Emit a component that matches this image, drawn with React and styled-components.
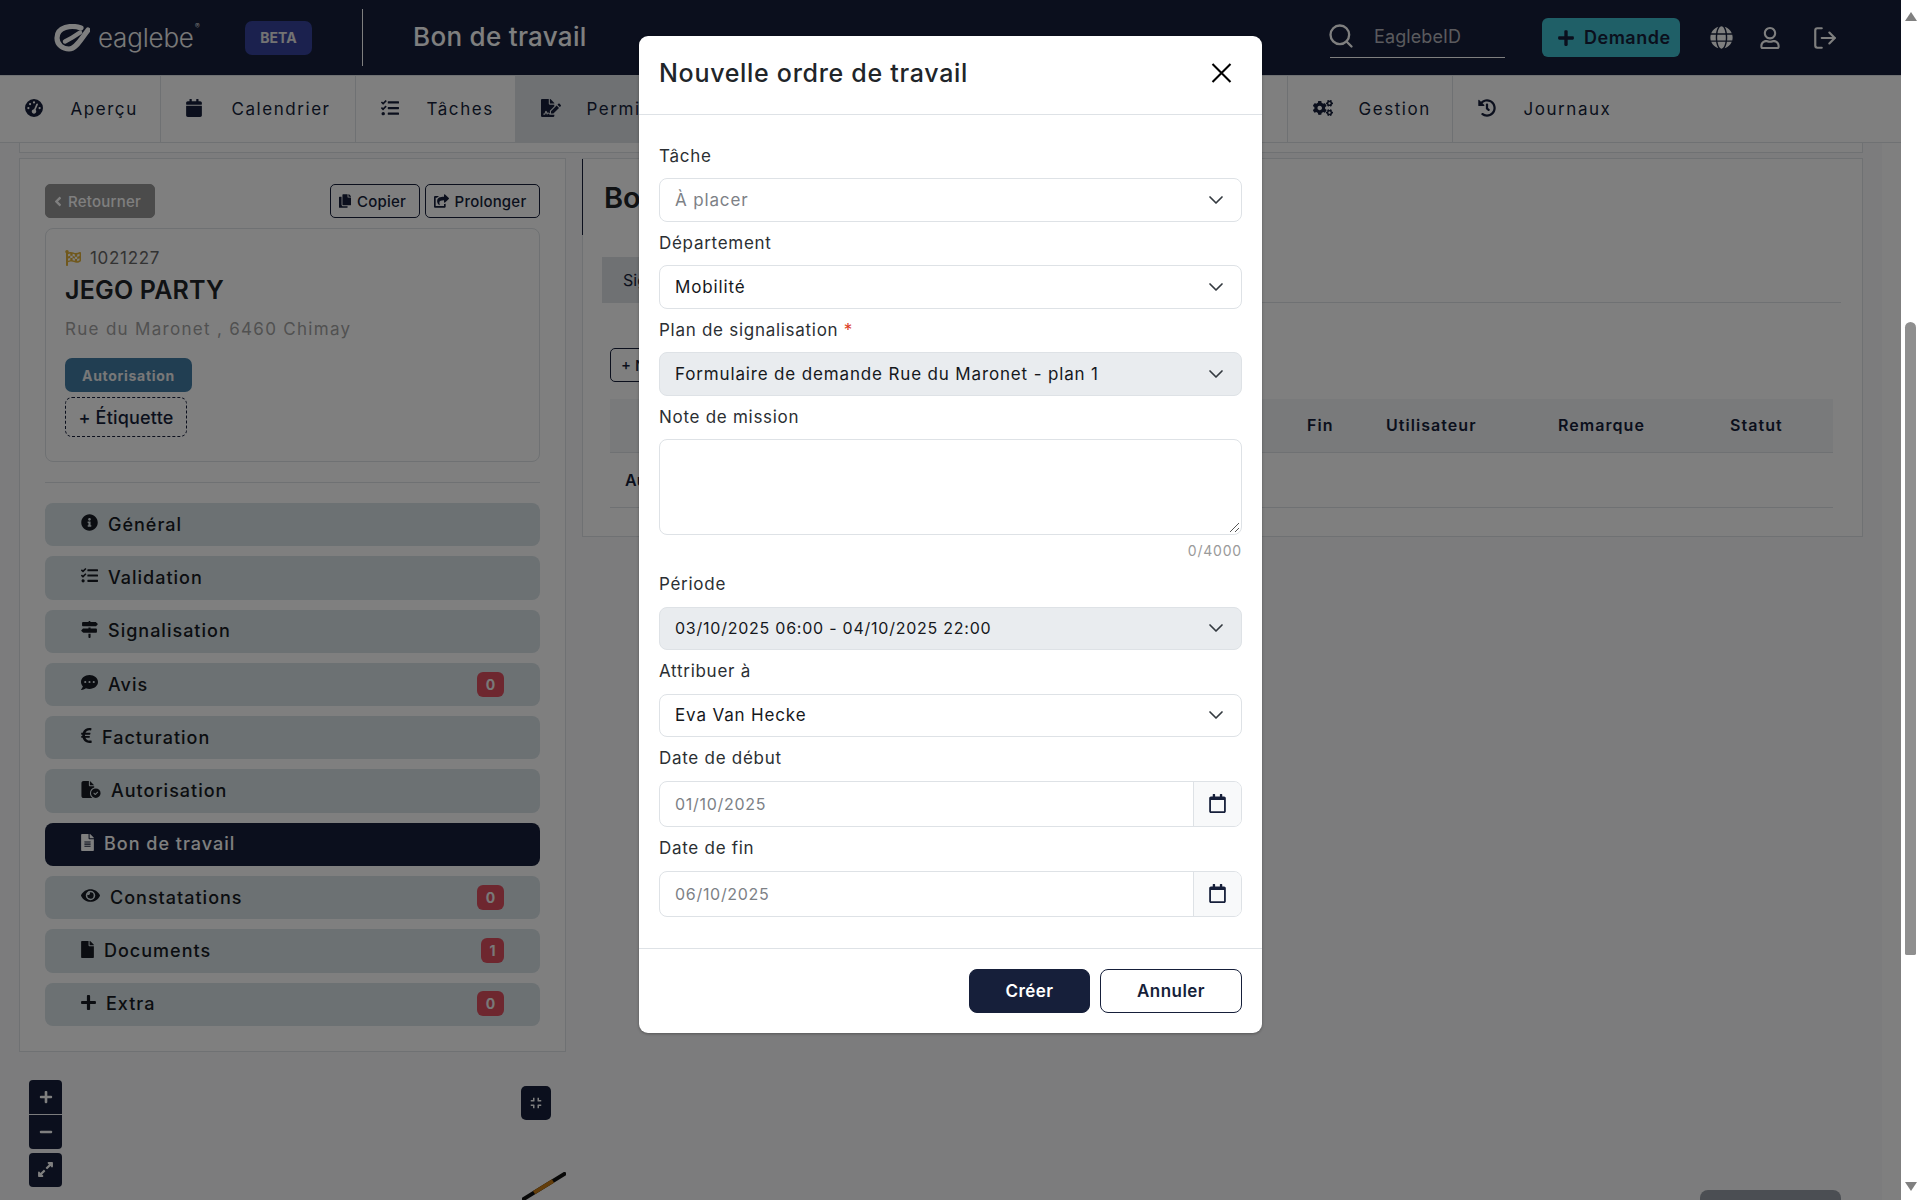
import React from "react";
import styled, { createGlobalStyle } from "styled-components";
import {
  FaCalendar,
  FaTasks,
  FaFileSignature,
  FaCogs,
  FaHistory,
  FaInfoCircle,
  FaCommentDots,
  FaEuroSign,
  FaEye,
  FaFile,
  FaFileAlt,
  FaPlus,
  FaMinus,
  FaCopy,
  FaShareSquare,
  FaFlagCheckered,
  FaGlobe,
  FaExpandAlt,
  FaCompress,
  FaRegCalendar,
  FaRegUser,
  FaAngleLeft,
} from "react-icons/fa";
import { FaGaugeHigh, FaSignsPost, FaFileCircleCheck } from "react-icons/fa6";
import { LuLogOut, LuSearch } from "react-icons/lu";

const navy = "#161f3a";
const line = "#dee2e6";

const GlobalStyle = createGlobalStyle`
  html, body {
    margin: 0;
    padding: 0;
    overflow: hidden;
  }
  * {
    box-sizing: border-box;
  }
  body {
    font-family: Inter, "Liberation Sans", sans-serif;
    color: #212529;
  }
`;

const Shell = styled.div`
  display: flex;
  width: 1920px;
  height: 1200px;
  overflow: hidden;
  background: #fff;
`;

const PageArea = styled.div`
  position: relative;
  width: 1901px;
  height: 1200px;
  overflow: hidden;
  background: #fff;
`;

const Backdrop = styled.div`
  position: absolute;
  inset: 0;
  background: rgba(0, 0, 0, 0.5);
`;

const ScrollTrack = styled.div`
  width: 19px;
  display: flex;
  flex-direction: column;
  align-items: center;
  background: #fff;
`;

const ScrollThumb = styled.div`
  width: 11px;
  height: 633px;
  margin-top: 301px;
  border-radius: 6px 6px 2px 2px;
  background: #8f8f8f;
`;

const ArrowUp = styled.div`
  margin-top: 12px;
  width: 0;
  height: 0;
  border-left: 6px solid transparent;
  border-right: 6px solid transparent;
  border-bottom: 9px solid #808080;
`;

const ArrowDown = styled.div`
  margin-top: 227px;
  width: 0;
  height: 0;
  border-left: 6px solid transparent;
  border-right: 6px solid transparent;
  border-top: 9px solid #808080;
`;

const TopBar = styled.header`
  height: 75px;
  display: flex;
  align-items: center;
  background: ${navy};
  color: #fff;
`;

const Logo = styled.div`
  display: flex;
  align-items: center;
  margin-left: 54px;
  width: 191px;
  gap: 8px;
`;

const LogoText = styled.span`
  position: relative;
  font-size: 26px;
  font-weight: 300;
  letter-spacing: -0.2px;
  color: #f2f2f2;
  line-height: 1;
  sup {
    position: absolute;
    top: -2px;
    right: -6px;
    font-size: 7px;
    letter-spacing: 0;
  }
`;

const BetaBadge = styled.span`
  width: 67px;
  height: 34px;
  display: flex;
  align-items: center;
  justify-content: center;
  border-radius: 7px;
  background: #36429c;
  font-size: 14px;
  font-weight: 700;
  color: #e6e6e6;
`;

const BarDivider = styled.div`
  width: 1px;
  height: 57px;
  margin: 0 50px;
  background: #fff;
`;

const BarTitle = styled.h1`
  margin: 0 0 2px;
  flex: 1;
  font-size: 26px;
  font-weight: 500;
  letter-spacing: 0.3px;
  color: #fff;
`;

const SearchField = styled.div`
  width: 175px;
  height: 43px;
  margin: 0 -1px 2px 1px;
  display: flex;
  align-items: center;
  gap: 19px;
  border-bottom: 1px solid #fff;
  color: #fff;
  svg {
    margin-left: -3px;
  }
  span {
    font-size: 18px;
    color: #b5b5bc;
    letter-spacing: 0.1px;
  }
`;

const DemandButton = styled.button`
  width: 138px;
  height: 39px;
  margin: 0 30px 0 38px;
  display: flex;
  align-items: center;
  gap: 9px;
  padding: 0 0 0 15px;
  border: 0;
  border-radius: 6px;
  background: #3ebece;
  color: ${navy};
  font: 600 18px Inter, sans-serif;
  letter-spacing: 0.5px;
`;

const BarIcons = styled.div`
  margin-right: 63px;
  display: flex;
  align-items: center;
  gap: 26px;
  color: #fff;
  svg:last-child {
    margin-left: 5px;
  }
`;

const NavBar = styled.nav`
  height: 68px;
  display: flex;
  background: #fff;
  border-top: 1px solid ${line};
  border-bottom: 1px solid ${line};
`;

const NavItem = styled.a`
  width: ${(p) => p.$width}px;
  display: flex;
  align-items: center;
  padding-left: 25px;
  border-right: 1px solid ${line};
  background: ${(p) => (p.$active ? line : "transparent")};
  color: ${navy};
  font-size: 17px;
  letter-spacing: 1.55px;
  white-space: nowrap;
  &:last-child {
    border-right: 0;
  }
`;

const NavIcon = styled.span`
  width: 45.5px;
  flex: none;
  display: flex;
  margin-top: -3px;
  svg {
    width: ${(p) => p.$iconWidth}px;
  }
`;

const Content = styled.div`
  width: 1882px;
  height: 1057px;
  padding: 0 19px;
  background: #f8f9fa;
`;

const TopStrip = styled.div`
  height: 10px;
  margin-bottom: 5px;
  background: #fff;
  border: 1px solid ${line};
  border-top: 0;
`;

const Columns = styled.div`
  display: flex;
  align-items: flex-start;
  gap: 16px;
`;

const LeftColumn = styled.div`
  width: 547px;
  flex: none;
`;

const Panel = styled.section`
  padding: 25px 25px 25px;
  background: #fff;
  border: 1px solid ${line};
`;

const ActionRow = styled.div`
  display: flex;
  gap: 5px;
  justify-content: flex-end;
  margin-bottom: 10px;
`;

const SmallButton = styled.button`
  height: 34px;
  width: ${(p) => p.$width}px;
  margin-right: ${(p) => (p.$back ? "auto" : "0")};
  display: flex;
  align-items: center;
  justify-content: center;
  gap: 6px;
  padding: 0 5px 0 0;
  border-radius: 5px;
  border: 1px solid ${(p) => (p.$back ? "#969696" : navy)};
  background: ${(p) => (p.$back ? "#969696" : "#fff")};
  color: ${(p) => (p.$back ? "#fff" : navy)};
  font: 500 15px Inter, sans-serif;
  letter-spacing: 0.2px;
  svg {
    width: ${(p) => p.$iconWidth}px;
  }
`;

const InfoCard = styled.div`
  height: 234px;
  padding: 19px 19px 0;
  border: 1px solid ${line};
  border-radius: 8px;
`;

const RefRow = styled.div`
  display: flex;
  align-items: center;
  gap: 9px;
  height: 20px;
  font-size: 17px;
  letter-spacing: 0.7px;
  color: #666;
`;

const SiteName = styled.h2`
  margin: 6px 0 0;
  font-size: 25px;
  line-height: 32px;
  font-weight: 600;
  letter-spacing: 0.2px;
  color: #212529;
`;

const Address = styled.div`
  margin-top: 11px;
  height: 24px;
  font-size: 17px;
  line-height: 24px;
  letter-spacing: 1.3px;
  color: #a3a3a3;
`;

const StatusPill = styled.div`
  margin-top: 17px;
  width: 127px;
  height: 34px;
  display: flex;
  align-items: center;
  justify-content: center;
  border-radius: 7px;
  background: #427ca4;
  color: #f0f0f0;
  font-size: 14px;
  font-weight: 700;
  letter-spacing: 0.7px;
`;

const TagButton = styled.div`
  margin-top: 5px;
  width: 122px;
  height: 40px;
  display: flex;
  align-items: center;
  justify-content: center;
  border: 1px dashed ${navy};
  border-radius: 7px;
  color: ${navy};
  font-size: 18px;
  font-weight: 500;
  letter-spacing: 0.2px;
`;

const PanelRule = styled.hr`
  margin: 20px 0 20px;
  border: 0;
  border-top: 1px solid ${line};
`;

const SectionList = styled.div`
  display: flex;
  flex-direction: column;
  gap: 10px;
`;

const SectionButton = styled.div`
  height: 43.3px;
  display: flex;
  align-items: center;
  padding: 0 36px 1px 36px;
  border-radius: 8px;
  background: ${(p) => (p.$active ? navy : "#d8e2e6")};
  color: ${(p) => (p.$active ? "#fff" : "#161a22")};
  font-size: 18px;
  font-weight: 500;
  letter-spacing: 1px;
`;

const SectionIcon = styled.span`
  display: flex;
  margin: -3px 10px 0 0;
  svg {
    width: ${(p) => p.$iconWidth}px;
  }
`;

const CountBadge = styled.span`
  margin: 0 0 0 auto;
  min-width: ${(p) => (p.$narrow ? 23 : 27)}px;
  height: 25px;
  display: flex;
  align-items: center;
  justify-content: center;
  border-radius: 6px;
  background: #dc4f5f;
  color: #f2f2f2;
  font-size: 14px;
  font-weight: 700;
  letter-spacing: 0;
`;

const MapArea = styled.div`
  position: relative;
  height: 148px;
`;

const MapControl = styled.button`
  position: absolute;
  left: 10px;
  top: ${(p) => p.$top}px;
  width: 33px;
  height: ${(p) => p.$height}px;
  display: flex;
  align-items: center;
  justify-content: center;
  padding: 0;
  border: 0;
  border-radius: ${(p) => p.$radius};
  background: ${navy};
  color: #fff;
`;

const CompressButton = styled.button`
  position: absolute;
  right: 15px;
  top: 34px;
  width: 30px;
  height: 34px;
  display: flex;
  align-items: center;
  justify-content: center;
  padding: 0;
  border: 0;
  border-radius: 5px;
  background: ${navy};
  color: #fff;
`;

const RouteLine = styled.svg`
  position: absolute;
  right: 0;
  bottom: 0;
`;

const MainCard = styled.section`
  flex: 1;
  height: 379px;
  background: #fff;
  border: 1px solid ${line};
`;

const TitleBlock = styled.div`
  height: 76px;
  margin-left: -1px;
  display: flex;
  align-items: center;
  padding: 0 0 0 21px;
  border-left: 1px solid ${navy};
`;

const MainTitle = styled.h2`
  margin: 0;
  font-size: 29px;
  font-weight: 600;
  color: #212529;
`;

const TabRow = styled.div`
  height: 46px;
  margin: 22px 21px 0 19px;
  display: flex;
  border-bottom: 1px solid ${line};
`;

const Tab = styled.div`
  padding: 0 21px;
  display: flex;
  align-items: center;
  background: ${line};
  font-size: 16px;
  color: ${navy};
`;

const AddRow = styled.div`
  margin: 45px 0 17px 27px;
`;

const AddButton = styled.button`
  height: 34px;
  padding: 0 10px;
  border: 1px solid ${navy};
  border-radius: 5px;
  background: #fff;
  color: ${navy};
  font: 500 15px Inter, sans-serif;
`;

const TableHead = styled.div`
  height: 54px;
  padding-bottom: 2px;
  margin: 0 29px 0 27px;
  display: grid;
  grid-template-columns: 697px 79px 172px 172px 1fr;
  align-items: center;
  background: #f3f4f6;
  border-bottom: 1px solid ${line};
  color: ${navy};
  font-size: 16px;
  font-weight: 600;
  letter-spacing: 1.05px;
`;

const TableRow = styled.div`
  height: 55px;
  margin: 0 29px 0 27px;
  padding-left: 15px;
  display: flex;
  align-items: center;
  border-bottom: 1px solid ${line};
  color: ${navy};
  font-size: 16px;
  font-weight: 600;
`;

const FloatingTab = styled.div`
  position: absolute;
  left: 1700px;
  bottom: 0;
  width: 141px;
  height: 10px;
  border-radius: 8px 8px 0 0;
  background: #969ca6;
`;

const Modal = styled.div`
  position: absolute;
  left: 639px;
  top: 36px;
  width: 623px;
  height: 997px;
  display: flex;
  flex-direction: column;
  background: #fff;
  border-radius: 9px;
  box-shadow: 0 1px 3px rgba(0, 0, 0, 0.3);
  overflow: hidden;
`;

const ModalHeader = styled.div`
  height: 79px;
  flex: none;
  display: flex;
  align-items: center;
  justify-content: space-between;
  padding: 0 30px 4px 20px;
  border-bottom: 1px solid ${line};
`;

const ModalTitle = styled.h3`
  margin: 0;
  font-size: 25px;
  font-weight: 500;
  letter-spacing: 0.7px;
  color: #212529;
`;

const ModalBody = styled.div`
  flex: 1;
  padding: 29.5px 20px 0;
`;

const Field = styled.div`
  margin-bottom: 10px;
`;

const FieldLabel = styled.label`
  display: block;
  height: 22.5px;
  margin-bottom: 11px;
  font-size: 17px;
  line-height: 23px;
  letter-spacing: 0.72px;
  color: #2b2f33;
  em {
    font-style: normal;
    color: #dc3c1e;
  }
`;

const SelectBox = styled.div`
  height: 43.5px;
  display: flex;
  align-items: center;
  justify-content: space-between;
  padding: 0 17px 0 15px;
  border: 1px solid ${line};
  border-radius: 8px;
  background: ${(p) => (p.$filled ? "#e9ecef" : "#fff")};
  color: ${(p) => (p.$muted ? "#7d8186" : "#16181c")};
  font-size: ${(p) => (p.$numeric ? 16 : 17)}px;
  letter-spacing: ${(p) => (p.$numeric ? 0.76 : 0.85)}px;
`;

const NoteBox = styled.div`
  position: relative;
  height: 96px;
  border: 1px solid ${line};
  border-radius: 8px;
`;

const ResizeGrip = styled.svg`
  position: absolute;
  right: 1px;
  bottom: 1px;
`;

const NoteCount = styled.div`
  margin-top: 6px;
  margin-bottom: 12px;
  height: 20px;
  text-align: right;
  font-size: 14px;
  line-height: 20px;
  letter-spacing: 0.8px;
  color: #9a9a9a;
`;

const DateGroup = styled.div`
  height: 46.5px;
  display: flex;
  border: 1px solid ${line};
  border-radius: 8px;
  overflow: hidden;
`;

const DateValue = styled.div`
  flex: 1;
  display: flex;
  align-items: center;
  padding-left: 15px;
  color: #7d8186;
  font-size: 16px;
  letter-spacing: 0.7px;
`;

const DateAddon = styled.div`
  width: 48px;
  display: flex;
  align-items: center;
  justify-content: center;
  background: #f8f9fa;
  border-left: 1px solid ${line};
  color: ${navy};
`;

const ModalFooter = styled.div`
  height: 85px;
  flex: none;
  display: flex;
  align-items: center;
  justify-content: flex-end;
  gap: 10px;
  padding: 0 20px;
  border-top: 1px solid ${line};
`;

const FooterButton = styled.button`
  width: ${(p) => p.$width}px;
  height: 44px;
  border: 1px solid ${navy};
  border-radius: 8px;
  background: ${(p) => (p.$primary ? navy : "#fff")};
  color: ${(p) => (p.$primary ? "#fff" : navy)};
  font: 600 17px Inter, sans-serif;
  letter-spacing: 0.45px;
`;

const navItems = [
  { label: "Aperçu", width: 161, w: 18, icon: <FaGaugeHigh size={18} /> },
  { label: "Calendrier", width: 195, w: 16, icon: <FaCalendar size={18} /> },
  { label: "Tâches", width: 160, w: 18, icon: <FaTasks size={18} /> },
  { label: "Permis", width: 200, w: 20, active: true, icon: <FaFileSignature size={18} /> },
  { label: "Planning", width: 200, w: 16, icon: <FaCalendar size={18} /> },
  { label: "Facture", width: 372, w: 14, icon: <FaFile size={18} /> },
  { label: "Gestion", width: 165, w: 20, icon: <FaCogs size={16} /> },
  { label: "Journaux", width: 180, w: 18, icon: <FaHistory size={18} /> },
];

const sections = [
  { label: "Général", w: 17, icon: <FaInfoCircle size={17} /> },
  { label: "Validation", w: 17, icon: <FaTasks size={17} /> },
  { label: "Signalisation", w: 17, icon: <FaSignsPost size={17} /> },
  { label: "Avis", w: 17, count: 0, icon: <FaCommentDots size={17} /> },
  { label: "Facturation", w: 11, icon: <FaEuroSign size={17} /> },
  { label: "Autorisation", w: 20, icon: <FaFileCircleCheck size={17} /> },
  { label: "Bon de travail", w: 13, active: true, icon: <FaFileAlt size={17} /> },
  { label: "Constatations", w: 19, count: 0, icon: <FaEye size={17} /> },
  { label: "Documents", w: 13, count: 1, icon: <FaFile size={17} /> },
  { label: "Extra", w: 15, count: 0, icon: <FaPlus size={17} /> },
];

function Chevron() {
  return (
    <svg width="16" height="16" viewBox="0 0 16 16" fill="none">
      <path
        d="m2 5 6 6 6-6"
        stroke="#343a40"
        strokeWidth="1.7"
        strokeLinecap="round"
        strokeLinejoin="round"
      />
    </svg>
  );
}

function CloseIcon() {
  return (
    <svg width="21" height="20" viewBox="0 0 21 20" fill="none">
      <path d="M1.5 1 19.5 19M19.5 1 1.5 19" stroke="#000" strokeWidth="2.1" />
    </svg>
  );
}

function LogoMark() {
  return (
    <svg width="36" height="28" viewBox="0 0 36 28" fill="none">
      <path
        d="M27 4C17 0.5 3 3 3 14C3 21 9 25 15 25C22 25 27 15 34 6"
        stroke="#fff"
        strokeWidth="5.2"
        strokeLinecap="round"
      />
      <path d="M11 17.5C16 15 21 12 26 8.5" stroke="#fff" strokeWidth="4.5" strokeLinecap="round" />
    </svg>
  );
}

function SelectField({ label, required, value, muted, filled, numeric }) {
  return (
    <Field>
      <FieldLabel>
        {label}
        {required && <em> *</em>}
      </FieldLabel>
      <SelectBox $muted={muted} $filled={filled} $numeric={numeric}>
        {value}
        <Chevron />
      </SelectBox>
    </Field>
  );
}

function DateField({ label, value }) {
  return (
    <Field>
      <FieldLabel>{label}</FieldLabel>
      <DateGroup>
        <DateValue>{value}</DateValue>
        <DateAddon>
          <FaRegCalendar size={19} />
        </DateAddon>
      </DateGroup>
    </Field>
  );
}

function App() {
  return (
    <Shell>
      <GlobalStyle />
      <PageArea>
        <TopBar>
          <Logo>
            <LogoMark />
            <LogoText>
              eaglebe<sup>®</sup>
            </LogoText>
          </Logo>
          <BetaBadge>BETA</BetaBadge>
          <BarDivider />
          <BarTitle>Bon de travail</BarTitle>
          <SearchField>
            <LuSearch size={28} />
            <span>EaglebeID</span>
          </SearchField>
          <DemandButton>
            <FaPlus size={18} />
            Demande
          </DemandButton>
          <BarIcons>
            <FaGlobe size={23} />
            <FaRegUser size={22} />
            <LuLogOut size={26} />
          </BarIcons>
        </TopBar>
        <NavBar>
          {navItems.map((item) => (
            <NavItem key={item.label} $width={item.width} $active={item.active}>
              <NavIcon $iconWidth={item.w}>{item.icon}</NavIcon>
              {item.label}
            </NavItem>
          ))}
        </NavBar>
        <Content>
          <TopStrip />
          <Columns>
            <LeftColumn>
              <Panel>
                <ActionRow>
                  <SmallButton $back $width={110} $iconWidth={8}>
                    <FaAngleLeft size={15} />
                    Retourner
                  </SmallButton>
                  <SmallButton $width={90} $iconWidth={12}>
                    <FaCopy size={14} />
                    Copier
                  </SmallButton>
                  <SmallButton $width={115} $iconWidth={15}>
                    <FaShareSquare size={14} />
                    Prolonger
                  </SmallButton>
                </ActionRow>
                <InfoCard>
                  <RefRow>
                    <FaFlagCheckered size={16} color="#e0b13a" />
                    1021227
                  </RefRow>
                  <SiteName>JEGO PARTY</SiteName>
                  <Address>Rue du Maronet , 6460 Chimay</Address>
                  <StatusPill>Autorisation</StatusPill>
                  <TagButton>+ Étiquette</TagButton>
                </InfoCard>
                <PanelRule />
                <SectionList>
                  {sections.map((s) => (
                    <SectionButton key={s.label} $active={s.active}>
                      <SectionIcon $iconWidth={s.w}>{s.icon}</SectionIcon>
                      {s.label}
                      {s.count !== undefined && (
                        <CountBadge $narrow={s.count === 1}>{s.count}</CountBadge>
                      )}
                    </SectionButton>
                  ))}
                </SectionList>
              </Panel>
              <MapArea>
                <MapControl $top={28} $height={34} $radius="4px 4px 0 0">
                  <FaPlus size={14} />
                </MapControl>
                <MapControl $top={63} $height={34} $radius="0 0 4px 4px">
                  <FaMinus size={14} />
                </MapControl>
                <MapControl $top={101} $height={34} $radius="4px">
                  <FaExpandAlt size={17} />
                </MapControl>
                <CompressButton>
                  <FaCompress size={12} />
                </CompressButton>
                <RouteLine width="44" height="28" viewBox="0 0 44 28">
                  <path d="M0 28 44 1" stroke="#111" strokeWidth="4" />
                  <path d="M12 20.6 31 9" stroke="#c67a14" strokeWidth="4" />
                </RouteLine>
              </MapArea>
            </LeftColumn>
            <MainCard>
              <TitleBlock>
                <MainTitle>Bon de travail</MainTitle>
              </TitleBlock>
              <TabRow>
                <Tab>Signalisation</Tab>
              </TabRow>
              <AddRow>
                <AddButton>+ Nouveau</AddButton>
              </AddRow>
              <TableHead>
                <span />
                <span>Fin</span>
                <span>Utilisateur</span>
                <span>Remarque</span>
                <span>Statut</span>
              </TableHead>
              <TableRow>Autorisation</TableRow>
            </MainCard>
          </Columns>
        </Content>
        <FloatingTab />
        <Backdrop />
        <Modal>
          <ModalHeader>
            <ModalTitle>Nouvelle ordre de travail</ModalTitle>
            <CloseIcon />
          </ModalHeader>
          <ModalBody>
            <SelectField label="Tâche" value="À placer" muted />
            <SelectField label="Département" value="Mobilité" />
            <SelectField
              label="Plan de signalisation"
              required
              filled
              value="Formulaire de demande Rue du Maronet - plan 1"
            />
            <FieldLabel>Note de mission</FieldLabel>
            <NoteBox>
              <ResizeGrip width="12" height="12" viewBox="0 0 12 12">
                <path d="M2 11 11 2M7 11 11 7" stroke="#555" strokeWidth="1" />
              </ResizeGrip>
            </NoteBox>
            <NoteCount>0/4000</NoteCount>
            <SelectField label="Période" filled numeric value="03/10/2025 06:00 - 04/10/2025 22:00" />
            <SelectField label="Attribuer à" value="Eva Van Hecke" />
            <DateField label="Date de début" value="01/10/2025" />
            <DateField label="Date de fin" value="06/10/2025" />
          </ModalBody>
          <ModalFooter>
            <FooterButton $primary $width={121}>
              Créer
            </FooterButton>
            <FooterButton $width={142}>Annuler</FooterButton>
          </ModalFooter>
        </Modal>
      </PageArea>
      <ScrollTrack>
        <ArrowUp />
        <ScrollThumb />
        <ArrowDown />
      </ScrollTrack>
    </Shell>
  );
}

export default App;
